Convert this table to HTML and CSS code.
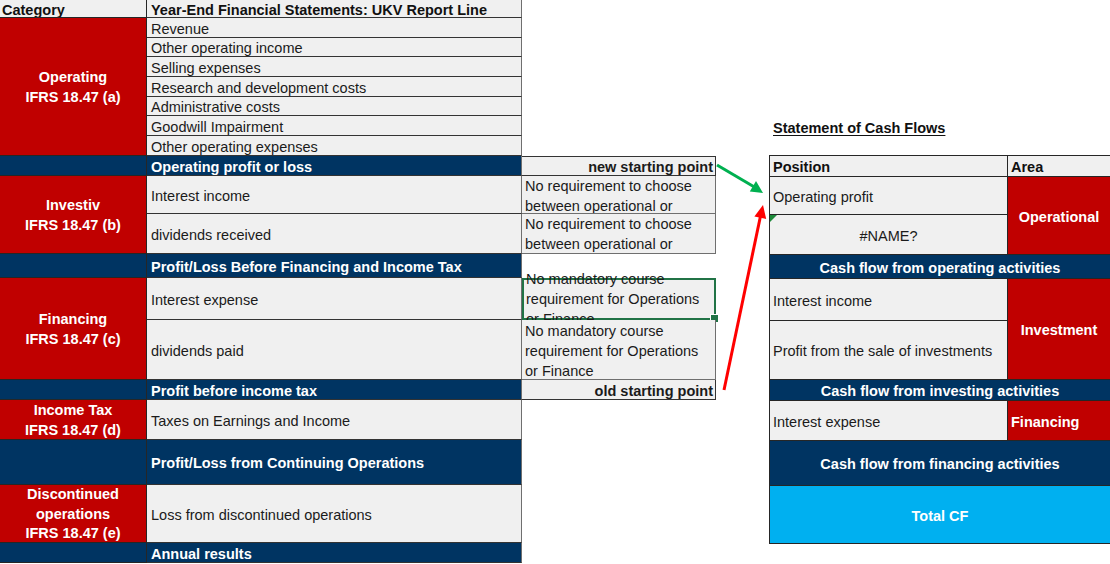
FILE: index.html
```html
<!DOCTYPE html>
<html lang="en">
<head>
<meta charset="utf-8">
<title>IFRS 18 – Categories and Statement of Cash Flows</title>
<link rel="stylesheet" href="styles.css">
</head>
<body>
<div class="sheet">
  <div class="ledger">
    <div class="cell a hd first">Category</div>
    <div class="cell b hd">Year-End Financial Statements: UKV Report Line</div>
    <div class="cell blank"></div>

    <div class="cell a cat span7">Operating<br>IFRS 18.47 (a)</div>
    <div class="cell b line">Revenue</div>
    <div class="cell blank"></div>
    <div class="cell b line">Other operating income</div>
    <div class="cell blank"></div>
    <div class="cell b line">Selling expenses</div>
    <div class="cell blank"></div>
    <div class="cell b line">Research and development costs</div>
    <div class="cell blank"></div>
    <div class="cell b line">Administrative costs</div>
    <div class="cell blank"></div>
    <div class="cell b line">Goodwill Impairment</div>
    <div class="cell blank"></div>
    <div class="cell b line">Other operating expenses</div>
    <div class="cell blank"></div>

    <div class="cell a band"></div>
    <div class="cell b band">Operating profit or loss</div>
    <div class="cell note mark top">new starting point</div>

    <div class="cell a cat span2">Investiv<br>IFRS 18.47 (b)</div>
    <div class="cell b line">Interest income</div>
    <div class="cell note topalign">No requirement to choose between operational or</div>
    <div class="cell b line">dividends received</div>
    <div class="cell note topalign">No requirement to choose between operational or</div>

    <div class="cell a band"></div>
    <div class="cell b band">Profit/Loss Before Financing and Income Tax</div>
    <div class="cell blank"></div>

    <div class="cell a cat span2">Financing<br>IFRS 18.47 (c)</div>
    <div class="cell b line">Interest expense</div>
    <div class="cell note selected">No mandatory course requirement for Operations or Finance</div>
    <div class="cell b line">dividends paid</div>
    <div class="cell note">No mandatory course requirement for Operations or Finance</div>

    <div class="cell a band"></div>
    <div class="cell b band">Profit before income tax</div>
    <div class="cell note mark">old starting point</div>

    <div class="cell a cat">Income Tax<br>IFRS 18.47 (d)</div>
    <div class="cell b line">Taxes on Earnings and Income</div>
    <div class="cell blank"></div>

    <div class="cell a band"></div>
    <div class="cell b band">Profit/Loss from Continuing Operations</div>
    <div class="cell blank"></div>

    <div class="cell a cat">Discontinued<br>operations<br>IFRS 18.47 (e)</div>
    <div class="cell b line">Loss from discontinued operations</div>
    <div class="cell blank"></div>

    <div class="cell a band"></div>
    <div class="cell b band">Annual results</div>
    <div class="cell blank"></div>
  </div>

  <div class="cf">
    <div class="cf-title"><span>Statement of Cash Flows</span></div>
    <div class="cf-grid">
      <div class="cell c hd">Position</div>
      <div class="cell c hd">Area</div>

      <div class="cell c line">Operating profit</div>
      <div class="cell c area span2">Operational</div>
      <div class="cell c line center error">#NAME?</div>

      <div class="cell c band wide">Cash flow from operating activities</div>

      <div class="cell c line">Interest income</div>
      <div class="cell c area span2">Investment</div>
      <div class="cell c line">Profit from the sale of investments</div>

      <div class="cell c band wide">Cash flow from investing activities</div>

      <div class="cell c line">Interest expense</div>
      <div class="cell c area left">Financing</div>

      <div class="cell c band wide">Cash flow from financing activities</div>

      <div class="cell c total wide">Total CF</div>
    </div>
  </div>

  <svg class="arrows" width="1110" height="564" viewBox="0 0 1110 564" aria-hidden="true">
    <line x1="717" y1="165" x2="753.5" y2="186.5" stroke="#00b050" stroke-width="3"/>
    <polygon points="763,193 749.8,191.4 756,181.1" fill="#00b050"/>
    <line x1="724" y1="390" x2="760.3" y2="217" stroke="#ff0000" stroke-width="3"/>
    <polygon points="763,205 766.2,218.9 754.4,216.5" fill="#ff0000"/>
  </svg>
</div>
</body>
</html>
```

FILE: styles.css
```css
* {
  box-sizing: border-box;
}

body {
  margin: 0;
  width: 1110px;
  height: 564px;
  overflow: hidden;
  background: #ffffff;
  font-family: "Liberation Sans", Arial, sans-serif;
  font-size: 14.5px;
  color: #1b1b1b;
}

.sheet {
  position: relative;
  display: flex;
  align-items: flex-start;
  width: 1110px;
  height: 564px;
}

/* ---------- left: category ledger ---------- */
.ledger {
  display: grid;
  grid-template-columns: 147px 375px 194px;
  grid-template-rows: 18px 20px 19px 20px 20px 19px 20px 20px 20px 38px 40px 24px 42px 60px 20px 40px 45px 58px 20px;
  flex: none;
}

.cell {
  display: flex;
  align-items: center;
  overflow: hidden;
  line-height: 20px;
  padding: 2px 3px 0 4px;
  white-space: nowrap;
}

.a {
  border-right: 1px solid #262626;
  border-bottom: 1px solid #262626;
}

.a.first {
  padding-left: 2px;
}

.b {
  border-right: 1px solid #6f6f6f;
  border-bottom: 1px solid #333333;
}

.hd {
  background: #f0f0f0;
  font-weight: bold;
  color: #111111;
}

.line {
  background: #f0f0f0;
}

.cat {
  background: #c00000;
  color: #ffffff;
  font-weight: bold;
  justify-content: center;
  text-align: center;
  line-height: 19.5px;
  padding-left: 3px;
}

.band {
  background: #003462;
  color: #ffffff;
  font-weight: bold;
}

.span7 {
  grid-row: span 7;
}

.span2 {
  grid-row: span 2;
}

.blank {
  background: transparent;
}

.note {
  position: relative;
  background: #f0f0f0;
  white-space: normal;
  padding-left: 3px;
  border-right: 1px solid #6f6f6f;
  border-bottom: 1px solid #6f6f6f;
}

.note.topalign {
  align-items: flex-start;
  padding-top: 0;
}

.note.top {
  border-top: 1px solid #333333;
}

.mark {
  font-weight: bold;
  justify-content: flex-end;
  padding-right: 2px;
  border-right-color: #333333;
  border-bottom-color: #333333;
}

.selected {
  overflow: visible;
  border: 2px solid #217346;
  padding-left: 2px;
  padding-top: 0;
  clip-path: inset(-6px -6px -6px -6px);
}

.selected::after {
  content: "";
  position: absolute;
  right: -5px;
  bottom: -5px;
  width: 7px;
  height: 7px;
  background: #217346;
  border: 1px solid #ffffff;
  z-index: 2;
}

/* ---------- right: statement of cash flows ---------- */
.cf {
  flex: none;
  margin-left: 53px;
  width: 341px;
  display: flex;
  flex-direction: column;
}

.cf-title {
  height: 155px;
  padding: 118px 0 0 4px;
  line-height: 20px;
  font-weight: bold;
  color: #111111;
}

.cf-title span {
  text-decoration: underline;
  text-underline-offset: 2px;
}

.cf-grid {
  display: grid;
  grid-template-columns: 238px 103px;
  grid-template-rows: 21px 38px 40px 24px 42px 59px 21px 40px 45px 58px;
  border-left: 1px solid #262626;
  border-top: 1px solid #262626;
}

.c {
  position: relative;
  padding-left: 3px;
  border-right: 1px solid #262626;
  border-bottom: 1px solid #262626;
}

.center {
  justify-content: center;
}

.area {
  background: #c00000;
  color: #ffffff;
  font-weight: bold;
  justify-content: center;
}

.area.left {
  justify-content: flex-start;
}

.wide {
  grid-column: span 2;
  justify-content: center;
}

.total {
  background: #00b0f0;
  color: #ffffff;
  font-weight: bold;
}

.error::before {
  content: "";
  position: absolute;
  top: 0;
  left: 0;
  border-top: 7px solid #1e8a3a;
  border-right: 7px solid transparent;
}

/* ---------- arrows overlay ---------- */
.arrows {
  position: absolute;
  top: 0;
  left: 0;
  pointer-events: none;
}
```
